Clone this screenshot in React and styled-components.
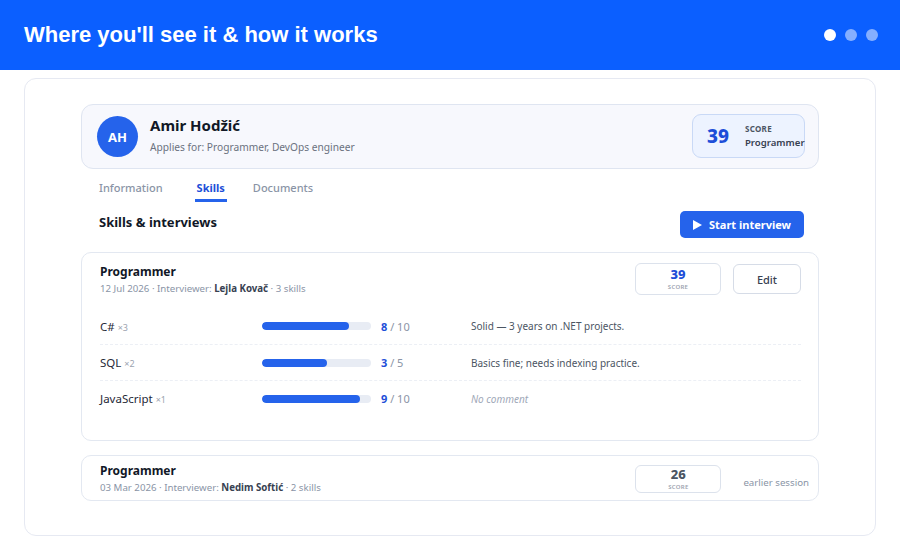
import styled, { createGlobalStyle } from "styled-components";

const GlobalStyle = createGlobalStyle`
  html, body {
    margin: 0;
    padding: 0;
    background: #ffffff;
    font-family: "Noto Sans", "Open Sans", sans-serif;
    color: #111827;
  }
  * { box-sizing: border-box; }
`;

const skills = [
  { name: "C#", weight: 3, score: 8, max: 10, comment: "Solid — 3 years on .NET projects." },
  { name: "SQL", weight: 2, score: 3, max: 5, comment: "Basics fine; needs indexing practice." },
  { name: "JavaScript", weight: 1, score: 9, max: 10, comment: "" },
];

const Header = styled.header`
  height: 70px;
  background: #0b5fff;
  display: flex;
  align-items: center;
  justify-content: space-between;
  padding: 0 22px 0 24px;
`;

const Title = styled.h1`
  margin: 0;
  color: #fff;
  font-family: "Liberation Sans", Arial, sans-serif;
  font-size: 22px;
  font-weight: 700;
`;

const Dots = styled.div`
  display: flex;
  gap: 9px;
`;

const Dot = styled.span`
  width: 12px;
  height: 12px;
  border-radius: 50%;
  background: ${(p) => (p.$active ? "#ffffff" : "rgba(255,255,255,0.5)")};
`;

const Frame = styled.div`
  margin: 8px 24px 0;
  height: 458px;
  border: 1px solid #e6e9f2;
  border-radius: 12px;
  padding: 25px 56px 0;
`;

const Candidate = styled.div`
  height: 65px;
  background: #f7f8fd;
  border: 1px solid #dfe5f1;
  border-radius: 12px;
  display: flex;
  align-items: center;
  padding: 0 13px 0 15px;
`;

const Avatar = styled.div`
  width: 41px;
  height: 41px;
  border-radius: 50%;
  background: #2563eb;
  color: #fff;
  font-size: 13px;
  font-weight: 700;
  display: flex;
  align-items: center;
  justify-content: center;
`;

const Who = styled.div`
  margin-left: 12px;
  margin-top: -5px;
  flex: 1;
`;

const Name = styled.div`
  font-size: 15px;
  font-weight: 700;
  color: #111827;
  line-height: 20px;
`;

const Sub = styled.div`
  font-size: 10.2px;
  color: #6b7280;
  margin-top: 5px;
`;

const ScoreBig = styled.div`
  width: 113px;
  height: 44px;
  background: #edf3ff;
  border: 1px solid #c9d9f6;
  border-radius: 9px;
  display: flex;
  align-items: center;
  padding-left: 14px;
  gap: 16px;
  margin-top: -2px;
`;

const BigNum = styled.div`
  font-size: 19px;
  font-weight: 800;
  color: #1d4ed8;
`;

const BigLabel = styled.div`
  display: flex;
  flex-direction: column;
  line-height: 14px;
  span:first-child {
    font-size: 8px;
    font-weight: 700;
    color: #4b5563;
    letter-spacing: 0.3px;
  }
  span:last-child {
    font-size: 9.6px;
    font-weight: 600;
    color: #374151;
  }
`;

const Tabs = styled.nav`
  display: flex;
  padding-left: 16px;
  margin-top: 9px;
`;

const Tab = styled.div`
  font-size: 11px;
  font-weight: ${(p) => (p.$active ? 700 : 500)};
  color: ${(p) => (p.$active ? "#1d4ed8" : "#8a94a6")};
  padding: 2px 2px 4px;
  border-bottom: 3px solid ${(p) => (p.$active ? "#2563eb" : "transparent")};
  margin-right: ${(p) => p.$gap || 0}px;
`;

const SectionHead = styled.div`
  display: flex;
  justify-content: space-between;
  align-items: flex-start;
  padding: 7px 15px 0 18px;
`;

const SectionTitle = styled.h2`
  margin: 4px 0 0;
  font-size: 13px;
  font-weight: 700;
  color: #111827;
`;

const PrimaryButton = styled.button`
  height: 27px;
  width: 124px;
  border: none;
  border-radius: 5px;
  background: #2563eb;
  color: #fff;
  font-family: inherit;
  font-size: 11px;
  font-weight: 700;
  display: flex;
  align-items: center;
  justify-content: center;
  gap: 7px;
  margin-top: 2px;
`;

const Session = styled.section`
  margin-top: 14px;
  border: 1px solid #e3e8f1;
  border-radius: 10px;
  padding: ${(p) => (p.$compact ? "7px 9px 8px 18px" : "10px 17px 0 18px")};
  height: ${(p) => (p.$compact ? "46px" : "189px")};
  background: #fff;
`;

const SessionTop = styled.div`
  display: flex;
  align-items: ${(p) => (p.$compact ? "center" : "flex-start")};
`;

const SessionInfo = styled.div`
  flex: 1;
`;

const SessionTitle = styled.div`
  font-size: 12px;
  font-weight: 700;
  color: #111827;
  line-height: 16px;
  margin-top: ${(p) => (p.$compact ? "0" : "1px")};
`;

const Meta = styled.div`
  font-size: 9.7px;
  color: #8a94a6;
  margin-top: 2px;
  b {
    color: #374151;
    font-weight: 700;
  }
`;

const ScoreBox = styled.div`
  width: 86px;
  height: ${(p) => (p.$compact ? "28px" : "32px")};
  border: 1px solid #dce2ec;
  border-radius: 6px;
  display: flex;
  flex-direction: column;
  align-items: center;
  justify-content: center;
  line-height: 1;
  span:first-child {
    font-size: 13px;
    font-weight: 800;
    color: ${(p) => (p.$muted ? "#4b5563" : "#1d4ed8")};
  }
  span:last-child {
    font-size: 6px;
    font-weight: 600;
    color: #9ca3af;
    margin-top: 3px;
    letter-spacing: 0.3px;
  }
`;

const EditButton = styled.button`
  width: 68px;
  height: 30px;
  margin-left: 12px;
  margin-top: 1px;
  border: 1px solid #d6dce7;
  border-radius: 6px;
  background: #fff;
  font-family: inherit;
  font-size: 11px;
  font-weight: 500;
  color: #374151;
`;

const Earlier = styled.div`
  margin-left: 22px;
  margin-top: 7px;
  font-size: 9.7px;
  color: #8a94a6;
`;

const Rows = styled.div`
  margin-top: 13px;
`;

const Row = styled.div`
  display: grid;
  grid-template-columns: 162px 119px 90px 1fr;
  align-items: center;
  height: 36px;
  border-top: ${(p) => (p.$first ? "none" : "1px dashed #eceff5")};
`;

const SkillName = styled.div`
  font-size: 11.5px;
  color: #1f2937;
  span {
    font-size: 9px;
    color: #9ca3af;
    margin-left: 3px;
  }
`;

const Track = styled.div`
  width: 109px;
  height: 8px;
  border-radius: 4px;
  background: #e8ecf4;
  overflow: hidden;
`;

const Fill = styled.div`
  height: 100%;
  border-radius: 4px;
  background: #2563eb;
`;

const Value = styled.div`
  font-size: 11px;
  color: #8a94a6;
  b {
    color: #1d4ed8;
    font-weight: 700;
  }
`;

const Comment = styled.div`
  font-size: 10px;
  color: ${(p) => (p.$empty ? "#a0a8b8" : "#4b5563")};
  font-style: ${(p) => (p.$empty ? "italic" : "normal")};
`;

const Play = () => (
  <svg width="9" height="10" viewBox="0 0 9 10">
    <path d="M0 0 L9 5 L0 10 Z" fill="#fff" />
  </svg>
);

export default function App() {
  return (
    <>
      <GlobalStyle />
      <Header>
        <Title>Where you'll see it &amp; how it works</Title>
        <Dots>
          <Dot $active />
          <Dot />
          <Dot />
        </Dots>
      </Header>
      <Frame>
        <Candidate>
          <Avatar>AH</Avatar>
          <Who>
            <Name>Amir Hodžić</Name>
            <Sub>Applies for: Programmer, DevOps engineer</Sub>
          </Who>
          <ScoreBig>
            <BigNum>39</BigNum>
            <BigLabel>
              <span>SCORE</span>
              <span>Programmer</span>
            </BigLabel>
          </ScoreBig>
        </Candidate>

        <Tabs>
          <Tab $gap={30}>Information</Tab>
          <Tab $gap={24} $active>Skills</Tab>
          <Tab>Documents</Tab>
        </Tabs>

        <SectionHead>
          <SectionTitle>Skills &amp; interviews</SectionTitle>
          <PrimaryButton>
            <Play />
            Start interview
          </PrimaryButton>
        </SectionHead>

        <Session>
          <SessionTop>
            <SessionInfo>
              <SessionTitle>Programmer</SessionTitle>
              <Meta>
                12 Jul 2026 · Interviewer: <b>Lejla Kovač</b> · 3 skills
              </Meta>
            </SessionInfo>
            <ScoreBox>
              <span>39</span>
              <span>SCORE</span>
            </ScoreBox>
            <EditButton>Edit</EditButton>
          </SessionTop>
          <Rows>
            {skills.map((s, i) => (
              <Row key={s.name} $first={i === 0}>
                <SkillName>
                  {s.name}
                  <span>×{s.weight}</span>
                </SkillName>
                <Track>
                  <Fill style={{ width: `${(s.score / s.max) * 100}%` }} />
                </Track>
                <Value>
                  <b>{s.score}</b> / {s.max}
                </Value>
                <Comment $empty={!s.comment}>{s.comment || "No comment"}</Comment>
              </Row>
            ))}
          </Rows>
        </Session>

        <Session $compact>
          <SessionTop $compact>
            <SessionInfo>
              <SessionTitle $compact>Programmer</SessionTitle>
              <Meta>
                03 Mar 2026 · Interviewer: <b>Nedim Softić</b> · 2 skills
              </Meta>
            </SessionInfo>
            <ScoreBox $compact $muted>
              <span>26</span>
              <span>SCORE</span>
            </ScoreBox>
            <Earlier>earlier session</Earlier>
          </SessionTop>
        </Session>
      </Frame>
    </>
  );
}
